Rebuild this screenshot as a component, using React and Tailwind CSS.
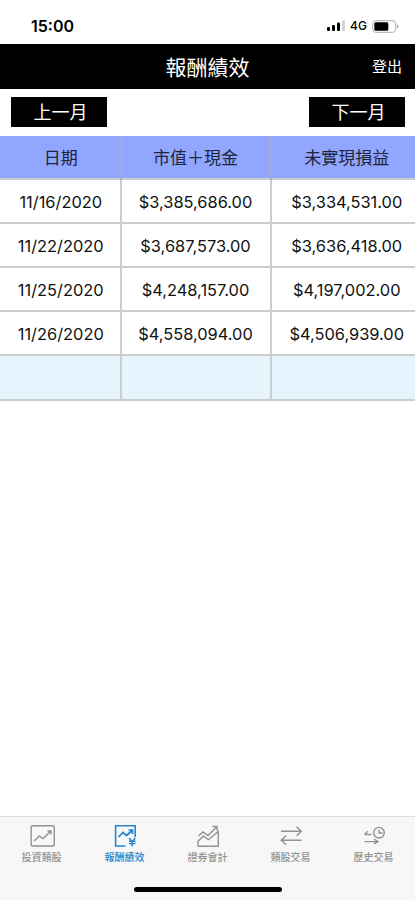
const rows = [
  { date: "11/16/2020", value: "$3,385,686.00", profit: "$3,334,531.00" },
  { date: "11/22/2020", value: "$3,687,573.00", profit: "$3,636,418.00" },
  { date: "11/25/2020", value: "$4,248,157.00", profit: "$4,197,002.00" },
  { date: "11/26/2020", value: "$4,558,094.00", profit: "$4,506,939.00" },
];

function TabIcon({ children }) {
  return (
    <svg
      viewBox="0 0 28 24"
      className="h-6 w-7"
      fill="none"
      stroke="currentColor"
      strokeWidth="1.4"
    >
      {children}
    </svg>
  );
}

const tabs = [
  {
    label: "投資類股",
    icon: (
      <TabIcon>
        <rect x="3.1" y="1.8" width="23.2" height="20.2" rx="1.8" />
        <path d="M6 17l5.5-5 3.5 2.5 8-7.5M19.5 7H23v3.5" />
      </TabIcon>
    ),
  },
  {
    label: "報酬績效",
    active: true,
    icon: (
      <TabIcon>
        <path d="M14.5 22H4.6V1.8H24.2V13" strokeWidth="1.6" />
        <path d="M7.5 13l4.5-4.5 3.5 3L21.5 6M17.5 6h4v4" strokeWidth="1.7" />
        <path d="M18 14l3.2 3.5 3.2-3.5M21.2 17.5V22.5M18 17.3h6.5M18 19.6h6.5" />
      </TabIcon>
    ),
  },
  {
    label: "證券會計",
    icon: (
      <TabIcon>
        <path d="M4 22.2V17.2l5.5-5 5 3.5L24.3 7.5v14.7z" />
        <path d="M4.5 12L9 8l5 3.5L22.5 3M18.5 2.5H23V7" />
      </TabIcon>
    ),
  },
  {
    label: "類股交易",
    icon: (
      <TabIcon>
        <path d="M4 7.3h20M19.5 2.8L24.3 7.3l-4.8 4.5M24.5 16.3h-20M9 11.8L4.2 16.3 9 20.8" />
      </TabIcon>
    ),
  },
  {
    label: "歷史交易",
    icon: (
      <TabIcon>
        <circle cx="19" cy="8.7" r="5.3" />
        <path d="M19 5.5V9h3.5M11.5 10.5H5M7.8 7.2L4.5 10.5M4.5 17.6h13M14 15l4 2.6-4 2.2" />
      </TabIcon>
    ),
  },
];

function StatusBar() {
  return (
    <div className="flex h-11 items-center justify-between pt-2 pr-4 pl-[31px]">
      <span className="text-[16px] font-semibold">15:00</span>
      <div className="flex items-center gap-1">
        <svg viewBox="0 0 20 12" className="h-3 w-5">
          <rect x="1" y="7" width="3" height="4" rx="1" />
          <rect x="6" y="5" width="3" height="6" rx="1" />
          <rect x="11" y="2.5" width="3" height="8.5" rx="1" />
          <rect x="16" y="0" width="3" height="11" rx="1" fill="#d4d4d4" />
        </svg>
        <span className="w-[18px] text-[12px] font-medium">4G</span>
        <svg viewBox="0 0 27 13" className="h-[13px] w-[27px]">
          <rect x="0.7" y="0.7" width="23" height="11.6" rx="3" fill="none" stroke="#aaa" />
          <rect x="2.3" y="2.2" width="14" height="8.6" rx="1.5" />
          <path d="M25 4.5c2 .7 2 3.3 0 4z" fill="#aaa" />
        </svg>
      </div>
    </div>
  );
}

function MonthButton({ children }) {
  return (
    <button className="h-[30px] w-24 bg-black pt-px pl-1 text-[18px] leading-[30px] text-white">
      {children}
    </button>
  );
}

function Row({ className, cells }) {
  return (
    <div
      className={`grid h-[44.2px] grid-cols-[121.5px_150px_143.5px] border-b-2 border-[#cdcdcd] text-center leading-[45px] ${className}`}
    >
      <div className="border-r-2 border-[#cdcdcd] pl-[2px]">{cells[0]}</div>
      <div className="border-r-2 border-[#cdcdcd]">{cells[1]}</div>
      <div className="pl-[7px]">{cells[2]}</div>
    </div>
  );
}

function App() {
  return (
    <div className="flex h-[900px] w-[415px] flex-col overflow-hidden bg-white font-['Inter','Noto_Sans_CJK_TC',sans-serif] text-black">
      <StatusBar />

      <header className="grid h-[45px] grid-cols-[1fr_auto_1fr] items-center bg-black pt-[2px] text-white">
        <h1 className="col-start-2 text-[21px] leading-none">報酬績效</h1>
        <span className="justify-self-end pr-[13px] text-[15px]">登出</span>
      </header>

      <div className="flex h-[46.5px] items-start justify-between px-[10.5px] pt-2">
        <MonthButton>上一月</MonthButton>
        <MonthButton>下一月</MonthButton>
      </div>

      <main className="flex-1">
        <Row
          className="bg-[#90a6ff] text-[17px] text-[#20243a] *:border-[#a3aad6]"
          cells={["日期", "市值＋現金", "未實現損益"]}
        />
        {rows.map((row) => (
          <Row
            key={row.date}
            className="text-[16.4px] text-[#111]"
            cells={[row.date, row.value, row.profit]}
          />
        ))}
        <Row className="bg-[#e6f4fe]" cells={["", "", ""]} />
      </main>

      <footer className="h-[84px] border-t border-[#dedede] bg-[#f7f7f7]">
        <nav className="grid h-[70px] grid-cols-5 pt-[7px]">
          {tabs.map((tab) => (
            <div
              key={tab.label}
              className={`flex flex-col items-center gap-[2px] ${
                tab.active ? "text-[#2584d0]" : "text-[#929292]"
              }`}
            >
              {tab.icon}
              <span className="text-[10px] leading-[14px] font-medium">{tab.label}</span>
            </div>
          ))}
        </nav>
        <div className="mx-auto h-[5px] w-[148px] rounded-full bg-black" />
      </footer>
    </div>
  );
}

export default App;
